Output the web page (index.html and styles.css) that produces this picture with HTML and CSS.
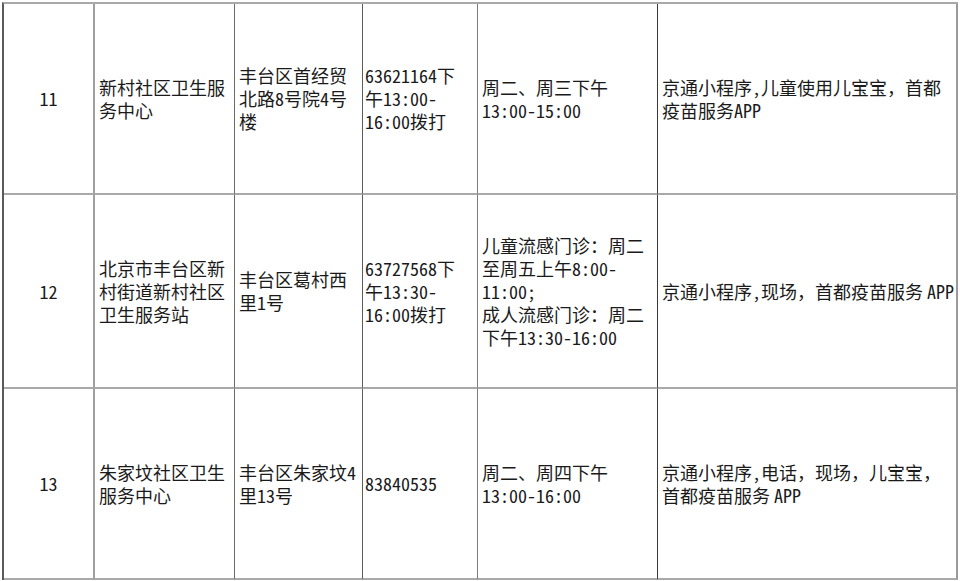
FILE: index.html
```html
<!DOCTYPE html>
<html lang="zh-CN">
<head>
<meta charset="utf-8">
<title>接种点信息</title>
<link rel="stylesheet" href="styles.css">
</head>
<body>
<table class="sheet">
  <colgroup>
    <col class="c-no">
    <col class="c-name">
    <col class="c-addr">
    <col class="c-tel">
    <col class="c-time">
    <col class="c-way">
  </colgroup>
  <tbody>
    <tr class="r1">
      <td class="no">11</td>
      <td class="name">新村社区卫生服<br>务中心</td>
      <td class="addr">丰台区首经贸<br>北路8号院4号<br>楼</td>
      <td class="tel">63621164下<br>午13:00-<br>16:00拨打</td>
      <td class="time">周二、周三下午<br>13:00-15:00</td>
      <td class="way">京通小程序,儿童使用儿宝宝<span class="fw">，</span>首都<br>疫苗服务APP</td>
    </tr>
    <tr class="r2">
      <td class="no">12</td>
      <td class="name">北京市丰台区新<br>村街道新村社区<br>卫生服务站</td>
      <td class="addr">丰台区葛村西<br>里1号</td>
      <td class="tel">63727568下<br>午13:30-<br>16:00拨打</td>
      <td class="time">儿童流感门诊<span class="fw">：</span>周二<br>至周五上午8:00-<br>11:00;<br>成人流感门诊<span class="fw">：</span>周二<br>下午13:30-16:00</td>
      <td class="way">京通小程序,现场<span class="fw">，</span>首都疫苗服务<span class="app">APP</span></td>
    </tr>
    <tr class="r3">
      <td class="no">13</td>
      <td class="name">朱家坟社区卫生<br>服务中心</td>
      <td class="addr">丰台区朱家坟4<br>里13号</td>
      <td class="tel">83840535</td>
      <td class="time">周二、周四下午<br>13:00-16:00</td>
      <td class="way">京通小程序,电话<span class="fw">，</span>现场<span class="fw">，</span>儿宝宝<span class="fw">，</span><br>首都疫苗服务<span class="app">APP</span></td>
    </tr>
  </tbody>
</table>
</body>
</html>
```

FILE: styles.css
```css
html, body {
  margin: 0;
  padding: 0;
  background: #ffffff;
}

body {
  padding: 2px 0 0 2px;
}

.sheet {
  border-collapse: separate;
  border-spacing: 0;
  table-layout: fixed;
  width: 956px;
  border-top: 2px solid #a9a9a9;
  border-left: 2px solid #5a5a5a;
  font-family: "Noto Sans CJK SC", "Noto Sans", sans-serif;
  font-feature-settings: "hwid" 1;
  font-size: 18px;
  line-height: 23px;
  color: #1a1a1a;
}

.fw {
  font-feature-settings: normal;
}

.app {
  margin-left: 4px;
}

.c-no   { width: 91px; }
.c-name { width: 140px; }
.c-addr { width: 128px; }
.c-tel  { width: 115px; }
.c-time { width: 180px; }
.c-way  { width: 300px; }

.sheet td {
  padding: 0 0 0 4px;
  vertical-align: middle;
  text-align: left;
  white-space: nowrap;
  overflow: hidden;
  border-bottom: 2px solid #a9a9a9;
  border-right: 1px solid #6a6a6a;
}

.r1 { height: 191px; }
.r2 { height: 194px; }
.r3 { height: 191px; }

.sheet td.no {
  text-align: center;
  padding: 0;
  border-right: 2px solid #a0a0a0;
}

.sheet td.addr { border-right-color: #5c5c5c; }
.sheet td.tel  { padding-left: 2px; border-right-color: #7c7c7c; }
.sheet td.time { border-right-color: #3a3a3a; }
.sheet td.way  { border-right: 2px solid #9a9a9a; }
```
